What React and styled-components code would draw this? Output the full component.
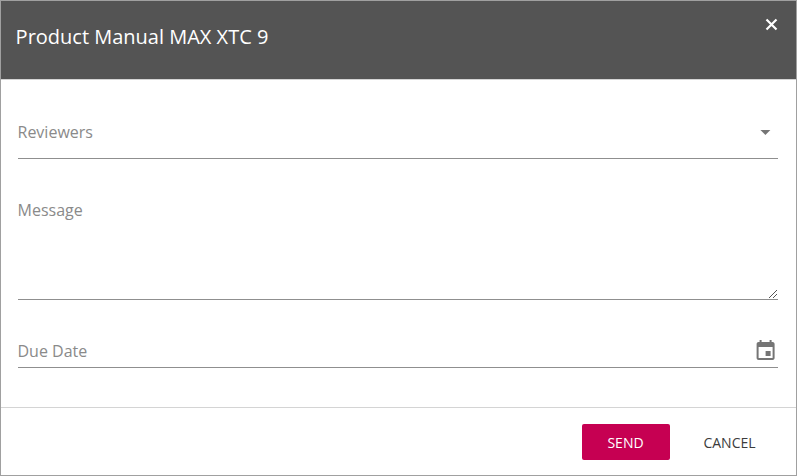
import React from "react";
import styled, { createGlobalStyle } from "styled-components";

const GlobalStyle = createGlobalStyle`
  * { box-sizing: border-box; }
  body { margin: 0; font-family: "Open Sans", sans-serif; }
`;

const Dialog = styled.section`
  display: flex;
  flex-direction: column;
  width: 797px;
  height: 476px;
  background: #fff;
  border: 1px solid #a0a0a0;
`;

const Header = styled.header`
  display: flex;
  justify-content: space-between;
  align-items: flex-start;
  height: 79px;
  padding: 16px 16px 0 14.6px;
  background: #545454;
  border-bottom: 1px solid #d4d4d4;
  color: #fff;
`;

const Title = styled.h1`
  margin: 5px 0 0;
  font-size: 20px;
  line-height: 30px;
  font-weight: 400;
`;

const CloseButton = styled.button`
  display: flex;
  padding: 0;
  border: 0;
  background: none;
  color: inherit;
`;

const Form = styled.form`
  display: flex;
  flex-direction: column;
  height: 327px;
  padding: 26px 18px 0 17px;
`;

const Field = styled.div`
  display: flex;
  justify-content: space-between;
  align-items: ${(p) => p.$align || "flex-start"};
  height: ${(p) => p.$height}px;
  padding-top: ${(p) => p.$top}px;
  border-bottom: 1px solid #8f8f8f;
`;

const Label = styled.label`
  margin-left: -0.5px;
  font-size: 16px;
  line-height: 24px;
  color: #8a8a8a;
`;

const MessageLabel = styled(Label)`
  align-self: flex-start;
`;

const FieldIcon = styled.svg`
  display: block;
  width: 24px;
  height: 24px;
  color: #757575;
`;

const ResizeGrip = styled.svg`
  display: block;
  width: 10px;
  height: 10px;
  color: #555;
`;

const Footer = styled.footer`
  display: flex;
  flex: 1;
  justify-content: flex-end;
  gap: 16px;
  padding: 16px 22px 0 0;
  border-top: 1px solid #d4d4d4;
`;

const Action = styled.button`
  width: 88px;
  height: 36px;
  padding: 0 1px 0 0;
  border: 0;
  border-radius: 2px;
  font: 400 14px "Open Sans", sans-serif;
  background: ${(p) => (p.$primary ? "#c60052" : "transparent")};
  color: ${(p) => (p.$primary ? "#fff" : "#3c3c3c")};
`;

export default function App() {
  return (
    <>
      <GlobalStyle />
      <Dialog>
        <Header>
          <Title>Product Manual MAX XTC 9</Title>
          <CloseButton aria-label="Close">
            <svg width="18" height="16" viewBox="0 0 18 16">
              <path d="M4.5 2.5l10 10M14.5 2.5l-10 10" stroke="currentColor" strokeWidth="2.2" />
            </svg>
          </CloseButton>
        </Header>
        <Form>
          <Field $height={53} $top={14}>
            <Label>Reviewers</Label>
            <FieldIcon viewBox="0.6 0 24 24">
              <path d="M7 10l5 5 5-5z" fill="currentColor" />
            </FieldIcon>
          </Field>
          <Field $height={141} $top={39} $align="flex-end">
            <MessageLabel>Message</MessageLabel>
            <ResizeGrip viewBox="0 0 10 10">
              <path
                d="M1 8h1v1h-1zM2 7h1v1h-1zM3 6h1v1h-1zM4 5h1v1h-1zM5 4h1v1h-1zM6 3h1v1h-1zM7 2h1v1h-1zM8 1h1v1h-1zM5 8h1v1h-1zM6 7h1v1h-1zM7 6h1v1h-1zM8 5h1v1h-1z"
                fill="currentColor"
              />
            </ResizeGrip>
          </Field>
          <Field $height={68} $top={39}>
            <Label>Due Date</Label>
            <FieldIcon viewBox="0.4 0 24 24">
              <path
                d="M17 12h-5v5h5v-5zM16 1v2H8V1H6v2H5c-1.11 0-1.99.9-1.99 2L3 19c0 1.1.89 2 2 2h14c1.1 0 2-.9 2-2V5c0-1.1-.9-2-2-2h-1V1h-2zm3 18H5V8h14v11z"
                fill="currentColor"
              />
            </FieldIcon>
          </Field>
        </Form>
        <Footer>
          <Action $primary>SEND</Action>
          <Action>CANCEL</Action>
        </Footer>
      </Dialog>
    </>
  );
}
